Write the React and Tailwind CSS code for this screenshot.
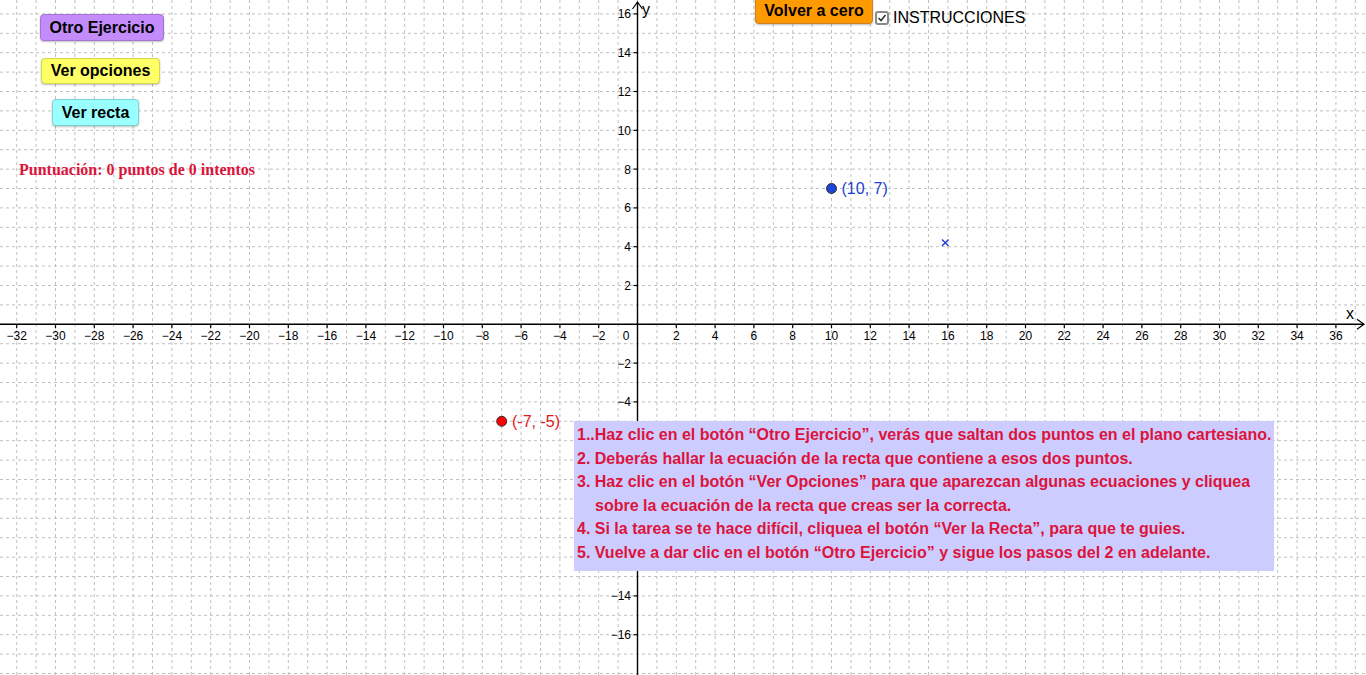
import React from "react";

const U = 19.4;
const OX = 637.5;
const OY = 324.3;
const px = (x) => OX + x * U;
const py = (y) => OY - y * U;

const range = (a, b) => {
  const out = [];
  for (let i = a; i <= b; i++) out.push(i);
  return out;
};

const fmt = (n) => (n < 0 ? "\u2212" + Math.abs(n) : String(n));

// y labels from -6 to -12 sit under the instructions box, so they are not drawn
const hiddenY = [-6, -8, -10, -12];

function Plane() {
  const xs = range(-33, 37);
  const ys = range(-18, 17);
  const xTicks = range(-16, 18).map((k) => k * 2).filter((v) => v !== 0);
  const yTicks = range(-8, 8)
    .map((k) => k * 2)
    .filter((v) => v !== 0 && !hiddenY.includes(v));

  return (
    <svg width="1366" height="675" className="absolute left-0 top-0" style={{ fontFamily: "'Liberation Sans', Arial, sans-serif" }}>
      {/* grid */}
      {xs.map((k) => (
        <line key={"gx" + k} x1={px(k)} y1="0" x2={px(k)} y2="675" stroke="#c0c0c0" strokeWidth="1" strokeDasharray="3 3" />
      ))}
      {ys.map((k) => (
        <line key={"gy" + k} x1="0" y1={py(k)} x2="1366" y2={py(k)} stroke="#c0c0c0" strokeWidth="1" strokeDasharray="3 3" />
      ))}

      {/* axes */}
      <line x1="0" y1={OY} x2="1364" y2={OY} stroke="#000" strokeWidth="1.4" />
      <line x1={OX} y1="675" x2={OX} y2="2" stroke="#000" strokeWidth="1.4" />
      <polyline points={`1357,${OY - 5} 1364,${OY} 1357,${OY + 5}`} fill="none" stroke="#000" strokeWidth="1.2" />
      <polyline points={`${OX - 5},9 ${OX},2 ${OX + 5},9`} fill="none" stroke="#000" strokeWidth="1.2" />

      {xTicks.map((v) => (
        <g key={"tx" + v}>
          <line x1={px(v)} y1={OY} x2={px(v)} y2={OY + 4} stroke="#000" strokeWidth="1.2" />
          <text x={px(v)} y={OY + 16} fontSize="12" textAnchor="middle" fill="#000">{fmt(v)}</text>
        </g>
      ))}
      <text x="626" y={OY + 16} fontSize="12" textAnchor="middle" fill="#000">0</text>
      {yTicks.map((v) => (
        <g key={"ty" + v}>
          <line x1={OX - 4} y1={py(v)} x2={OX} y2={py(v)} stroke="#000" strokeWidth="1.2" />
          <text x="631" y={py(v) + 4.5} fontSize="12" textAnchor="end" fill="#000">{fmt(v)}</text>
        </g>
      ))}

      <text x="1346" y="319" fontSize="16" fill="#000">x</text>
      <text x="642" y="15" fontSize="16" fill="#000">y</text>

      {/* points */}
      <circle cx={px(10)} cy={py(7)} r="5" fill="#1f45d8" stroke="#333" strokeWidth="1" />
      <text x="841.5" y="194" fontSize="16" fill="#1f3fd0">(10, 7)</text>
      <circle cx={px(-7)} cy={py(-5)} r="5" fill="#ff0000" stroke="#333" strokeWidth="1" />
      <text x="512" y="427" fontSize="16" fill="#e01818">(-7, -5)</text>

      <g stroke="#1f3fd0" strokeWidth="1.4">
        <line x1="942" y1="239.5" x2="948.5" y2="246" />
        <line x1="948.5" y1="239.5" x2="942" y2="246" />
      </g>
    </svg>
  );
}

function GgbButton({ className, children }) {
  return (
    <div
      className={
        "absolute flex items-center justify-center rounded-[4px] border text-[16px] font-bold text-black shadow-[0_1px_2px_rgba(0,0,0,0.25)] " +
        className
      }
    >
      {children}
    </div>
  );
}

export default function App() {
  return (
    <div
      className="relative w-[1366px] h-[675px] overflow-hidden bg-white"
      style={{ fontFamily: "'Liberation Sans', Arial, sans-serif" }}
    >
      <Plane />

      {/* applet widgets sit at fixed spots on the canvas */}
      <GgbButton className="left-[40px] top-[14px] w-[124px] h-[27px] bg-[#c48cfa] border-[#a573d6]">
        Otro Ejercicio
      </GgbButton>
      <GgbButton className="left-[41px] top-[58px] w-[119px] h-[26px] bg-[#ffff66] border-[#d6d64a]">
        Ver opciones
      </GgbButton>
      <GgbButton className="left-[52px] top-[99px] w-[87px] h-[27px] bg-[#99ffff] border-[#7ad3d3]">
        Ver recta
      </GgbButton>

      <div
        className="absolute left-[19px] top-[158px] text-[16px] font-bold text-[#dc143c] whitespace-nowrap"
        style={{ fontFamily: "'Liberation Serif', 'Times New Roman', serif" }}
      >
        Puntuación: 0 puntos de 0 intentos
      </div>

      <GgbButton className="left-[755px] top-[-3px] w-[118px] h-[27px] bg-[#ff9900] border-[#d08020]">
        Volver a cero
      </GgbButton>

      <div className="absolute left-[875px] top-[10px] flex items-center gap-[4px]">
        <div className="w-[14px] h-[14px] rounded-[3px] border-2 border-[#8a8a8a] bg-white flex items-center justify-center">
          <svg width="10" height="10" viewBox="0 0 10 10">
            <polyline points="1.5,5 4,7.5 8.5,2" fill="none" stroke="#333" strokeWidth="1.6" />
          </svg>
        </div>
        <span className="text-[16px] text-black leading-none">INSTRUCCIONES</span>
      </div>

      <div className="absolute left-[574px] top-[421px] w-[700px] h-[150px] bg-[#ccccff] px-[3px] pt-[2px] text-[16px] font-bold leading-[23.5px] text-[#dc143c] whitespace-nowrap">
        <div>1..Haz clic en el botón “Otro Ejercicio”, verás que saltan dos puntos en el plano cartesiano.</div>
        <div>2. Deberás hallar la ecuación de la recta que contiene a esos dos puntos.</div>
        <div>3. Haz clic en el botón “Ver Opciones” para que aparezcan algunas ecuaciones y cliquea</div>
        <div className="pl-[18px]">sobre la ecuación de la recta que creas ser la correcta.</div>
        <div>4. Si la tarea se te hace difícil, cliquea el botón “Ver la Recta”, para que te guies.</div>
        <div>5. Vuelve a dar clic en el botón “Otro Ejercicio” y sigue los pasos del 2 en adelante.</div>
      </div>
    </div>
  );
}
